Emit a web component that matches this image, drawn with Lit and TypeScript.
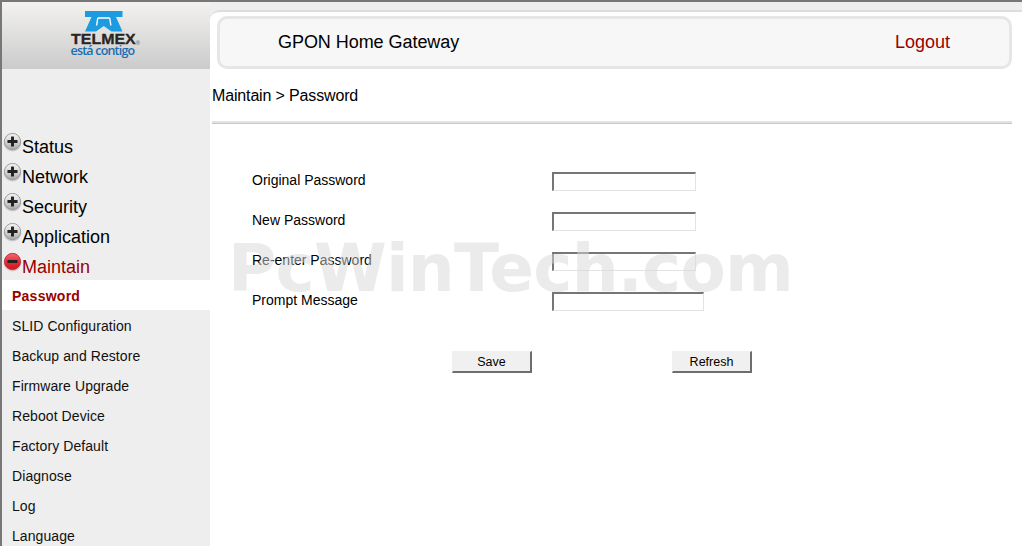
import { LitElement, html, css, svg } from "lit";
import { customElement } from "lit/decorators.js";

const plusIcon = (open: boolean) => {
  const id = open ? "r" : "g";
  return html`<svg class="ic" width="19" height="21" viewBox="0 0 18 20">
    <defs>
      <linearGradient id=${id} x1="0" y1="0" x2="0" y2="1">
        <stop offset="0" stop-color=${open ? "#f06a70" : "#f2f2f2"}></stop>
        <stop offset="0.5" stop-color=${open ? "#ee2c38" : "#d8d8d8"}></stop>
        <stop offset="1" stop-color=${open ? "#cc1822" : "#a8a8a8"}></stop>
      </linearGradient>
    </defs>
    <ellipse cx="9" cy="10.6" rx="8.4" ry="8" fill=${open ? "#d8c4c4" : "#c8c8c8"}></ellipse>
    <circle cx="9" cy="9" r="7.7" fill=${`url(#${id})`} stroke=${open ? "#a82a34" : "#8f8f8f"} stroke-width="0.8"></circle>
    <rect x="4.2" y="7.6" width="9.6" height="2.8" rx="0.5" fill="#222"></rect>
    ${open ? "" : svg`<rect x="7.6" y="4.2" width="2.8" height="9.6" rx="0.5" fill="#222"></rect>`}
  </svg>`;
};

@customElement("app-root")
export class AppRoot extends LitElement {
  static styles = css`
    :host {
      display: block;
      height: 100vh;
      overflow: hidden;
      position: relative;
      font-family: "Liberation Sans", Arial, sans-serif;
      color: #000;
      background: #fff;
    }
    .page {
      display: grid;
      grid-template-columns: 208px 1fr;
      height: 100%;
      box-sizing: border-box;
      border-top: 2px solid #777;
      border-left: 2px solid #777;
    }
    .side {
      background: #eee;
      display: flex;
      flex-direction: column;
      min-height: 0;
    }
    .logo {
      height: 67px;
      flex: none;
      background: linear-gradient(#f3f2f1, #cbcbcb);
      display: flex;
      justify-content: center;
    }
    .logo-in {
      width: 72px;
      margin-left: 1px;
      padding-top: 9px;
      display: flex;
      flex-direction: column;
      align-items: flex-start;
    }
    .logo svg {
      display: block;
      margin-left: 14px;
    }
    .tm {
      font-weight: bold;
      font-size: 14px;
      line-height: 11px;
      color: #2a2624;
      margin-top: 2px;
      white-space: nowrap;
      transform: scaleX(1.14);
      transform-origin: left;
      -webkit-text-stroke: 0.3px #2a2624;
    }
    .tm sup {
      font-size: 5px;
      font-weight: normal;
      color: #555;
      vertical-align: -1px;
      line-height: 0;
      -webkit-text-stroke: 0;
    }
    .slogan {
      font-family: "Open Sans", sans-serif;
      font-weight: 600;
      font-size: 12.5px;
      line-height: 11px;
      color: #1b6db3;
      white-space: nowrap;
      letter-spacing: -0.8px;
    }
    .menu {
      padding-top: 63px;
    }
    .top {
      height: 30px;
      display: flex;
      align-items: flex-start;
      font-size: 18px;
      box-sizing: border-box;
      padding-left: 1px;
    }
    .top.open {
      height: 28px;
    }
    .top .ic {
      flex: none;
    }
    .top span {
      line-height: 30px;
    }
    .top.open span {
      color: #900;
    }
    .sub {
      height: 30px;
      line-height: 33px;
      font-size: 14px;
      letter-spacing: 0.08px;
      padding-left: 10px;
      color: #111;
    }
    .sub.on {
      background: #fff;
      color: #900;
      font-weight: bold;
      letter-spacing: 0.25px;
    }
    .main {
      background: #eee;
      display: flex;
      flex-direction: column;
      min-width: 0;
    }
    .panel {
      margin-top: 8px;
      flex: 1;
      background: #fff;
      border-top-left-radius: 10px;
      border-top: 2px solid #ddd;
      padding-top: 4px;
      padding-left: 2px;
      padding-right: 10px;
      box-sizing: border-box;
    }
    .bar {
      margin-left: 5px;
      height: 53px;
      box-sizing: border-box;
      background: #f7f7f7;
      border: 3px solid #e6e6e6;
      border-radius: 10px;
      display: flex;
      align-items: center;
      justify-content: space-between;
      font-size: 18px;
      letter-spacing: -0.05px;
      padding: 0 59px 0 58px;
    }
    .bar .lo {
      color: #900;
      letter-spacing: 0;
    }
    .crumb {
      font-size: 16px;
      letter-spacing: -0.15px;
      line-height: 20px;
      margin-top: 17px;
    }
    .rule {
      margin-top: 15px;
      height: 3px;
      background: #e2e2e2;
      border-bottom: 1px solid #c8c8c8;
      box-sizing: border-box;
    }
    form {
      display: grid;
      grid-template-columns: 300px auto;
      justify-content: start;
      row-gap: 21px;
      padding: 48px 0 0 40px;
      align-items: center;
    }
    label {
      font-size: 14px;
      line-height: 19px;
      position: relative;
      top: -1px;
    }
    .inp {
      width: 144px;
      height: 19px;
      box-sizing: border-box;
      border-style: solid;
      border-width: 2px 1px 1px 2px;
      border-color: #767676 #e3e3e3 #e3e3e3 #767676;
      background: transparent;
      padding: 0;
      display: block;
      margin: 0;
    }
    .inp.wide {
      width: 152px;
    }
    .btns {
      display: flex;
      gap: 140px;
      padding: 40px 0 0 240px;
    }
    button {
      width: 80px;
      height: 22px;
      font-family: inherit;
      font-size: 12.5px;
      color: #000;
      background: #f0f0f0;
      border-style: solid;
      border-width: 1px 2px 2px 1px;
      border-color: #f0f0f0 #6e6e6e #6e6e6e #f0f0f0;
      padding: 0;
    }
    .wm {
      position: absolute;
      left: 228px;
      top: 231px;
      font-family: "DejaVu Sans", sans-serif;
      font-weight: bold;
      font-size: 66px;
      letter-spacing: -0.8px;
      line-height: 76px;
      color: rgba(215, 215, 215, 0.5);
      white-space: nowrap;
      pointer-events: none;
    }
  `;

  render() {
    const tops = ["Status", "Network", "Security", "Application"];
    const subs = [
      "SLID Configuration",
      "Backup and Restore",
      "Firmware Upgrade",
      "Reboot Device",
      "Factory Default",
      "Diagnose",
      "Log",
      "Language",
    ];
    return html`
      <div class="page">
        <aside class="side">
          <div class="logo">
            <div class="logo-in">
              <svg width="38" height="21" viewBox="0 0 38 21">
                <path fill="#1c9be0" d="M0 0H37.5V6H31L37.5 20.5H26.5L18.75 15L11 20.5H0L6.5 6H0Z"></path>
                <path fill="none" stroke="#fff" stroke-width="1.4" d="M12.8 7L11.6 14.5M24.7 7L25.9 14.5M12.8 7H24.7"></path>
              </svg>
              <div class="tm">TELMEX<sup>®</sup></div>
              <div class="slogan">está contigo</div>
            </div>
          </div>
          <nav class="menu">
            ${tops.map(
              (t) => html`<div class="top">${plusIcon(false)}<span>${t}</span></div>`
            )}
            <div class="top open">${plusIcon(true)}<span>Maintain</span></div>
            <div class="sub on">Password</div>
            ${subs.map((s) => html`<div class="sub">${s}</div>`)}
          </nav>
        </aside>
        <main class="main">
          <div class="panel">
            <div class="bar">
              <span>GPON Home Gateway</span>
              <span class="lo">Logout</span>
            </div>
            <div class="crumb">Maintain &gt; Password</div>
            <div class="rule"></div>
            <form>
              <label>Original Password</label><input class="inp" type="password" />
              <label>New Password</label><input class="inp" type="password" />
              <label>Re-enter Password</label><input class="inp" type="password" />
              <label>Prompt Message</label><input class="inp wide" type="text" />
            </form>
            <div class="btns">
              <button type="button">Save</button>
              <button type="button">Refresh</button>
            </div>
          </div>
        </main>
      </div>
      <div class="wm">PcWinTech.com</div>
    `;
  }
}
